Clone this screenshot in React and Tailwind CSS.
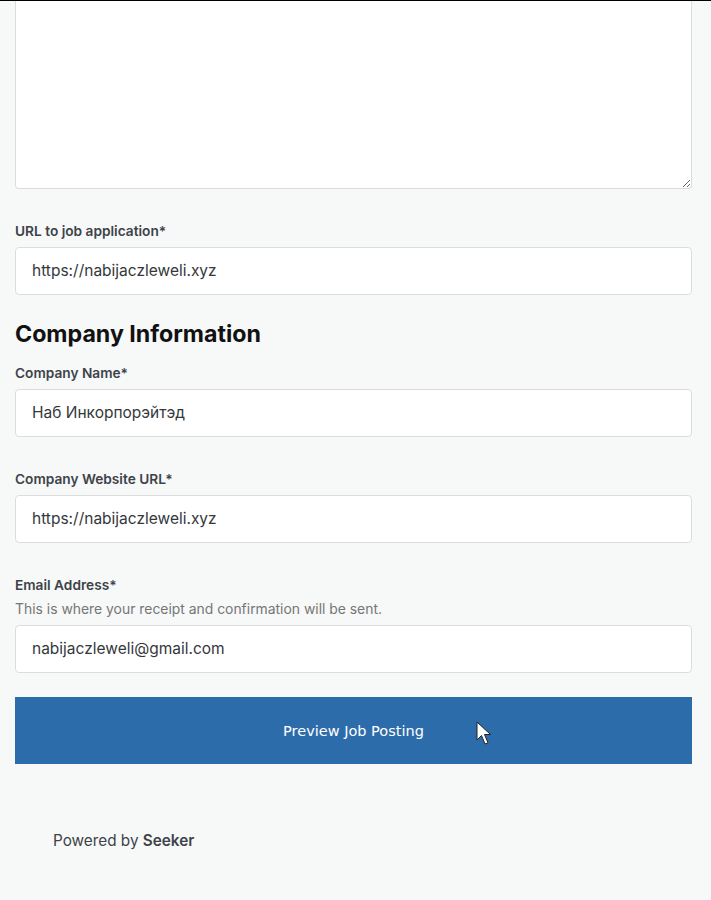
import React from "react";

function Field({ label, helper, value }) {
  return (
    <div className="flex flex-col">
      <label className="text-[13.7px] leading-5 font-semibold text-[#3d4349]">{label}</label>
      {helper && <p className="text-[13.9px] leading-[18px] text-[#767676] mt-[5px]">{helper}</p>}
      <div className={`${helper ? "mt-[7px]" : "mt-[6px]"} h-[48px] bg-white border border-[#dadcde] rounded-[4px] flex items-center pl-4 text-[15.5px] text-[#35383b]`}>
        {value}
      </div>
    </div>
  );
}

export default function App() {
  return (
    <div className="min-h-[900px] bg-[#f7f8f8] relative" style={{ fontFamily: "Inter, 'Noto Sans', sans-serif" }}>
      <div className="h-px bg-black" />
      <div className="pl-[15px] pr-[19px]">
        <textarea
          readOnly
          className="block w-full h-[188px] bg-white border border-t-0 border-[#dadcde] rounded-b-[4px] outline-none"
        />
        <div className="mt-[32px]">
          <Field label="URL to job application*" value="https://nabijaczleweli.xyz" />
        </div>
        <h2 className="mt-[23px] text-[23.2px] leading-8 font-bold text-[#111]">Company Information</h2>
        <div className="mt-[13px] flex flex-col gap-[32px]">
          <Field label="Company Name*" value="Наб Инкорпорэйтэд" />
          <Field label="Company Website URL*" value="https://nabijaczleweli.xyz" />
          <Field
            label="Email Address*"
            helper="This is where your receipt and confirmation will be sent."
            value="nabijaczleweli@gmail.com"
          />
        </div>
        <button
          className="mt-[24px] w-full h-[67px] bg-[#2d6cab] text-white flex items-center justify-center pt-[3px]"
          style={{ fontFamily: "'DejaVu Sans', sans-serif", fontSize: "14.5px" }}
        >
          Preview Job Posting
        </button>
      </div>
      <div className="mt-[67px] pl-[53px] text-[15.3px] leading-5 text-[#3d4349]">
        Powered by <span className="font-semibold">Seeker</span>
      </div>
      <svg className="absolute left-[476px] top-[721px]" width="16" height="25" viewBox="0 0 16 25">
        <path d="M1 1 L1 19 L5.5 14.5 L9 23 L12 21.8 L8.5 13.5 L14.5 13.5 Z" fill="white" stroke="#222" strokeWidth="1" strokeLinejoin="round" />
      </svg>
    </div>
  );
}
